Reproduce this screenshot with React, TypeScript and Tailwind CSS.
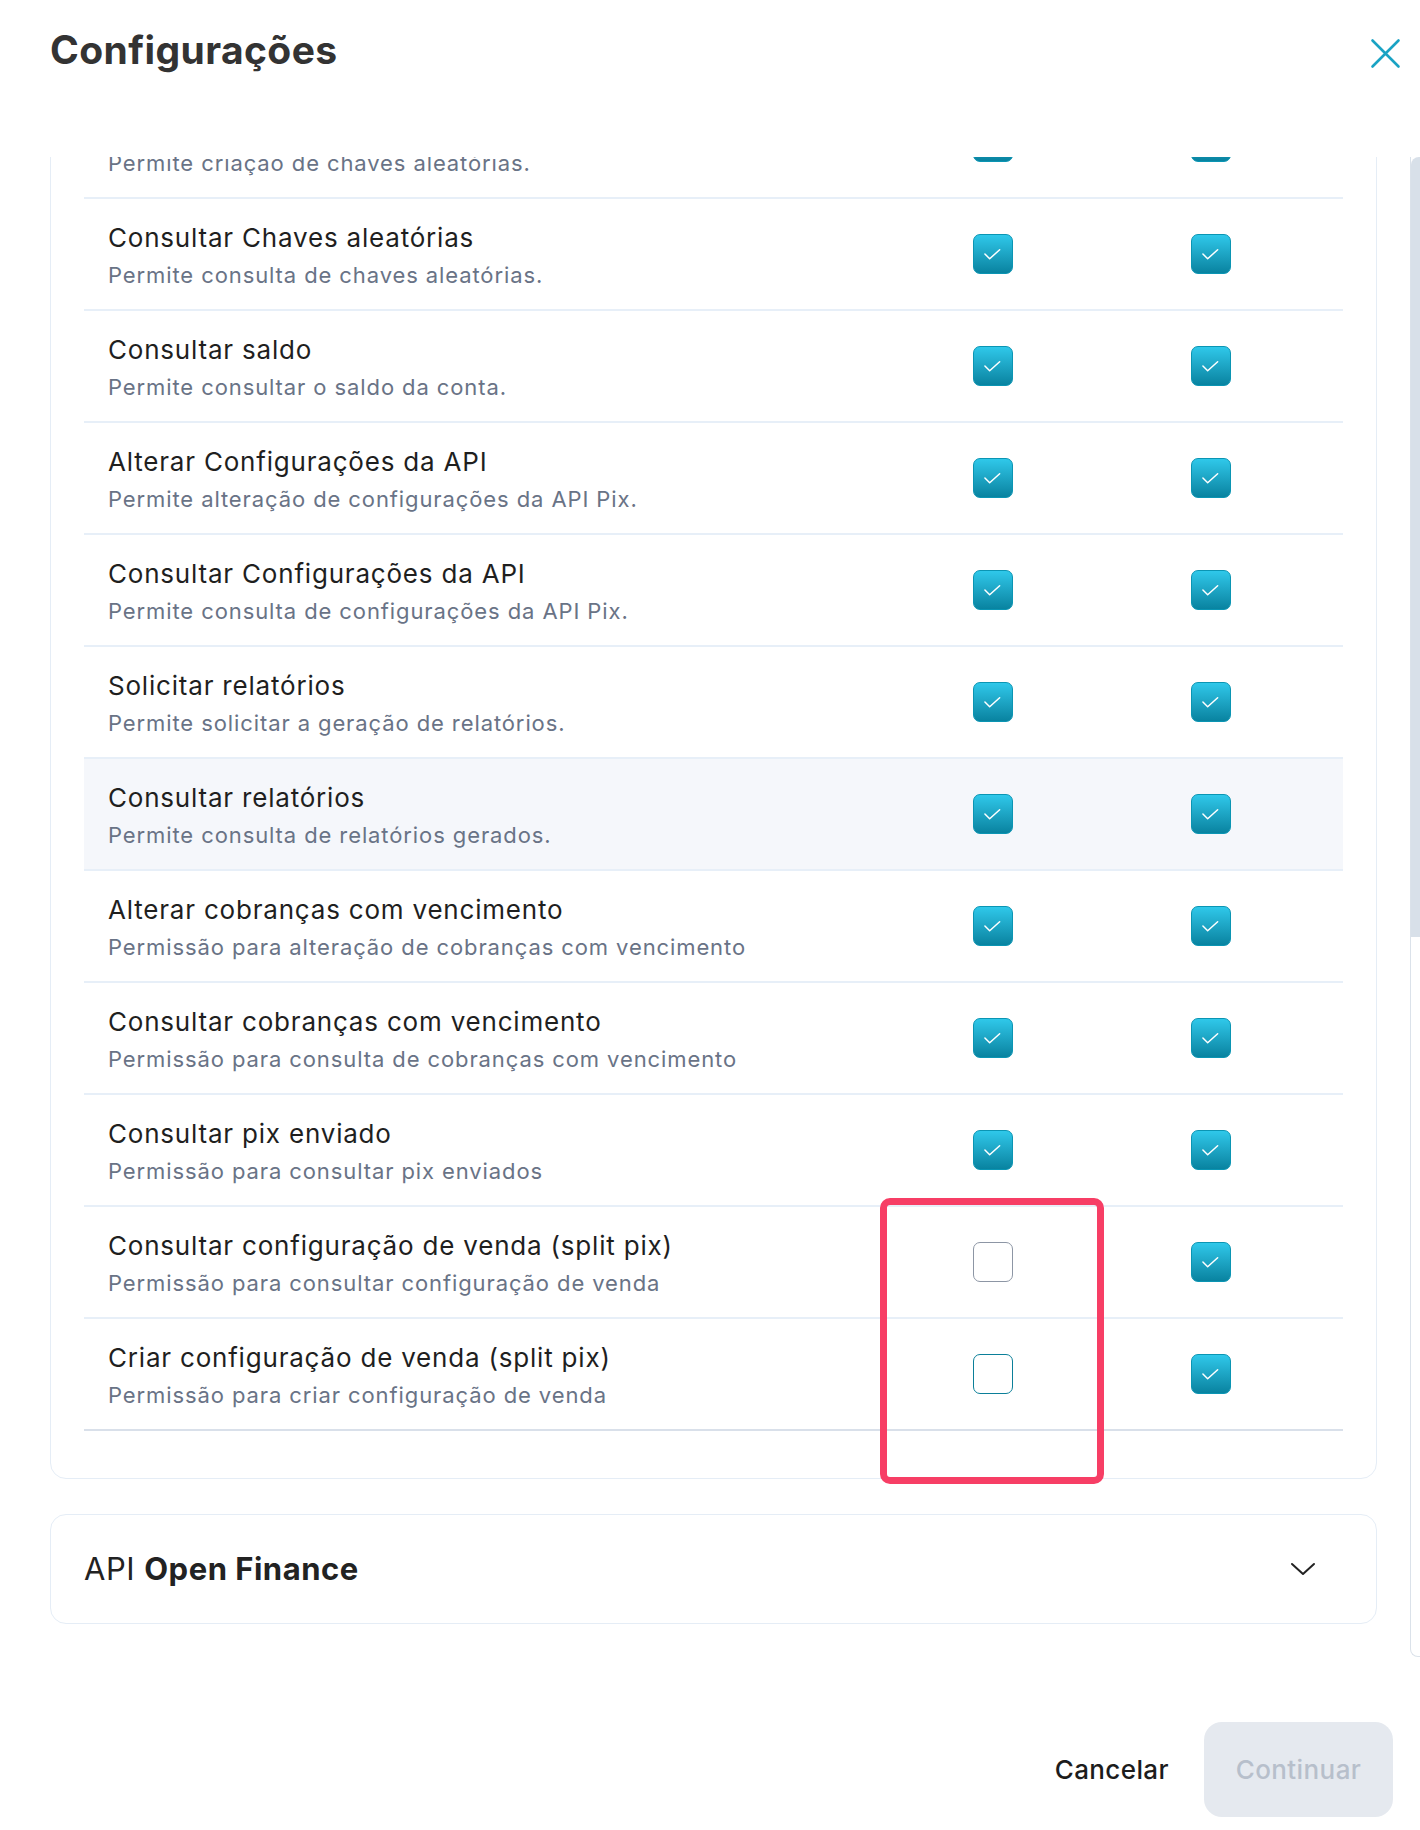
interface Permission {
  title: string;
  description: string;
  first: 'on' | 'off' | 'focus';
  highlighted?: boolean;
}

const permissions: Permission[] = [
  { title: 'Criar Chaves aleatórias', description: 'Permite criação de chaves aleatórias.', first: 'on' },
  { title: 'Consultar Chaves aleatórias', description: 'Permite consulta de chaves aleatórias.', first: 'on' },
  { title: 'Consultar saldo', description: 'Permite consultar o saldo da conta.', first: 'on' },
  { title: 'Alterar Configurações da API', description: 'Permite alteração de configurações da API Pix.', first: 'on' },
  { title: 'Consultar Configurações da API', description: 'Permite consulta de configurações da API Pix.', first: 'on' },
  { title: 'Solicitar relatórios', description: 'Permite solicitar a geração de relatórios.', first: 'on' },
  { title: 'Consultar relatórios', description: 'Permite consulta de relatórios gerados.', first: 'on', highlighted: true },
  { title: 'Alterar cobranças com vencimento', description: 'Permissão para alteração de cobranças com vencimento', first: 'on' },
  { title: 'Consultar cobranças com vencimento', description: 'Permissão para consulta de cobranças com vencimento', first: 'on' },
  { title: 'Consultar pix enviado', description: 'Permissão para consultar pix enviados', first: 'on' },
  { title: 'Consultar configuração de venda (split pix)', description: 'Permissão para consultar configuração de venda', first: 'off' },
  { title: 'Criar configuração de venda (split pix)', description: 'Permissão para criar configuração de venda', first: 'focus' },
];

function Checkbox({ state }: { state: 'on' | 'off' | 'focus' }) {
  if (state === 'on') {
    return (
      <div className="w-10 h-10 rounded-[7px] border border-[#0b95b3] bg-gradient-to-b from-[#2fc8ea] to-[#0883a0] flex items-center justify-center">
        <svg width="40" height="40" viewBox="0 0 40 40" fill="none">
          <path d="M11.5 20 L16.5 25 L27 15.5" stroke="white" strokeWidth="1.6" strokeLinecap="round" strokeLinejoin="round" />
        </svg>
      </div>
    );
  }
  return (
    <div
      className={`w-10 h-10 rounded-[7px] bg-white border-[1.5px] ${
        state === 'focus' ? 'border-[#0b7f99]' : 'border-[#8d96a5]'
      }`}
    />
  );
}

export default function App() {
  return (
    <div className="relative w-[1420px] h-[1830px] bg-white overflow-hidden" style={{ fontFamily: 'Inter, "Noto Sans", sans-serif' }}>
      {/* Header */}
      <div className="h-[157px] flex justify-between items-start pl-[50px] pr-[8px]">
        <h1 className="mt-[23px] text-[39px] leading-[54px] font-bold text-[#333333] tracking-[0.4px]">Configurações</h1>
        <button className="mt-[27px] text-[#1aa3c4]">
          <svg width="53" height="53" viewBox="0 0 53 53" fill="none">
            <path d="M13.5 13.5 L39.5 39.5 M39.5 13.5 L13.5 39.5" stroke="currentColor" strokeWidth="2.6" strokeLinecap="round" />
          </svg>
        </button>
      </div>

      {/* Scroll body */}
      <div className="flex h-[1500px]">
        <div className="flex-1 overflow-hidden pl-[50px] pr-[33px]">
          <div className="-mt-[71px] border-[1.5px] border-[#e5edf6] rounded-[16px] px-[33px] pb-[47px]">
            {permissions.map((p, i) => (
              <div
                key={p.title}
                className={`h-[112px] flex items-center border-b-2 ${
                  i === permissions.length - 1 ? 'border-[#d9e0ea]' : 'border-[#e7eff8]'
                } ${p.highlighted ? 'bg-[#f5f7fb]' : ''}`}
              >
                <div className="flex-1 pl-[24px] mt-[2px]">
                  <div className="text-[26px] leading-[34px] tracking-[0.8px] text-[#1f1f1f]">{p.title}</div>
                  <div className="mt-[5px] text-[22px] leading-[30px] tracking-[0.9px] text-[#697386]">{p.description}</div>
                </div>
                <div className="w-[218px] flex justify-center pl-[2px]">
                  <Checkbox state={p.first} />
                </div>
                <div className="w-[218px] flex justify-center mr-[24px] pl-[2px]">
                  <Checkbox state="on" />
                </div>
              </div>
            ))}
          </div>

          <div className="mt-[35px] h-[110px] border-[1.5px] border-[#e5edf6] rounded-[16px] flex items-center justify-between pl-[33px] pr-[60px]">
            <div className="text-[31px] tracking-[0.5px] text-[#222222]">
              API <span className="font-bold">Open Finance</span>
            </div>
            <svg width="26" height="16" viewBox="0 0 26 16" fill="none" className="text-[#222222]">
              <path d="M2 3 L13 13 L24 3" stroke="currentColor" strokeWidth="2" strokeLinecap="round" strokeLinejoin="round" />
            </svg>
          </div>
        </div>

        {/* Scrollbar */}
        <div className="w-[10px] h-[1500px] border-l border-b border-[#dbe2ea] rounded-bl-[8px]">
          <div className="h-[780px] bg-[#d8e0e9] rounded-tl-[8px]" />
        </div>
      </div>

      {/* Footer */}
      <div className="flex justify-end items-center gap-[35px] pr-[27px] pt-[65px]">
        <button className="text-[26px] font-medium tracking-[0.4px] text-[#1c1c1c]">Cancelar</button>
        <button className="w-[189px] h-[95px] rounded-[18px] bg-[#e5e9ef] text-[26px] font-medium tracking-[0.4px] text-[#b7bfcb]">Continuar</button>
      </div>

      {/* Annotation highlight */}
      <div className="absolute left-[880px] top-[1198px] w-[224px] h-[286px] border-[7px] border-[#f73e65] rounded-[10px]" />
    </div>
  );
}
